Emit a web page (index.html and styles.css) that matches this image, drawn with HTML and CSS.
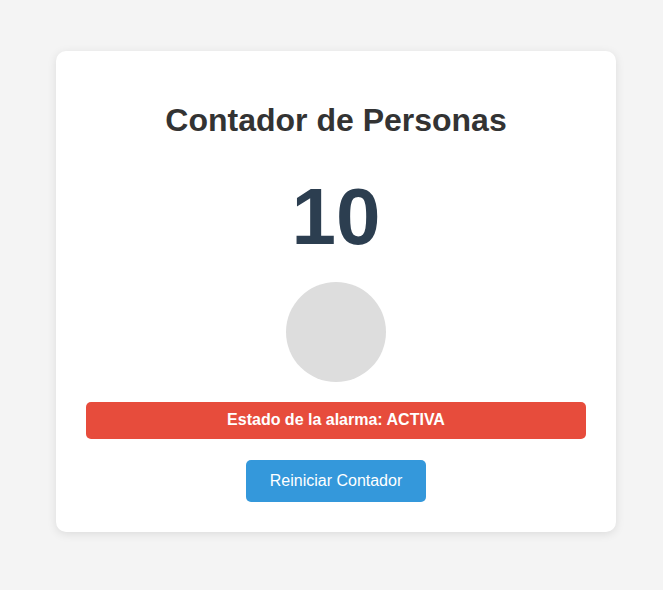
FILE: index.html
```html
<!DOCTYPE html>
<html lang="es">
<head>
<meta charset="utf-8">
<title>Contador de Personas</title>
<link rel="stylesheet" href="styles.css">
</head>
<body>
  <div class="card">
    <h1 class="title">Contador de Personas</h1>
    <div class="count">10</div>
    <div class="indicator"></div>
    <div class="alarm">Estado de la alarma: ACTIVA</div>
    <button class="reset" type="button">Reiniciar Contador</button>
  </div>
</body>
</html>
```

FILE: styles.css
```css
html, body {
  margin: 0;
  padding: 0;
}
body {
  background: #f4f4f4;
  font-family: "Liberation Sans", Arial, sans-serif;
  padding: 51px 47px 58px 56px;
}
.card {
  box-sizing: border-box;
  width: 560px;
  background: #ffffff;
  border-radius: 10px;
  box-shadow: 0 2px 10px rgba(0, 0, 0, 0.1);
  padding: 30px 30px 30px;
  display: flex;
  flex-direction: column;
  align-items: center;
  text-align: center;
}
.title {
  margin: 21.44px 0 0;
  font-size: 32px;
  font-weight: bold;
  color: #333333;
  line-height: 36.8px;
}
.count {
  margin-top: 31.5px;
  font-size: 80px;
  font-weight: bold;
  color: #2c3e50;
  line-height: 92px;
}
.indicator {
  margin-top: 19px;
  width: 100px;
  height: 100px;
  border-radius: 50%;
  background: #dddddd;
}
.alarm {
  margin-top: 20px;
  align-self: stretch;
  background: #e74c3c;
  color: #ffffff;
  font-weight: bold;
  font-size: 16px;
  padding: 9.5px 10px;
  border-radius: 5px;
  line-height: 18.4px;
}
.reset {
  margin-top: 21px;
  background: #3498db;
  color: #ffffff;
  border: none;
  border-radius: 5px;
  font-family: "Liberation Sans", Arial, sans-serif;
  font-size: 16px;
  line-height: 18px;
  padding: 12px 24px;
  cursor: pointer;
}
```
